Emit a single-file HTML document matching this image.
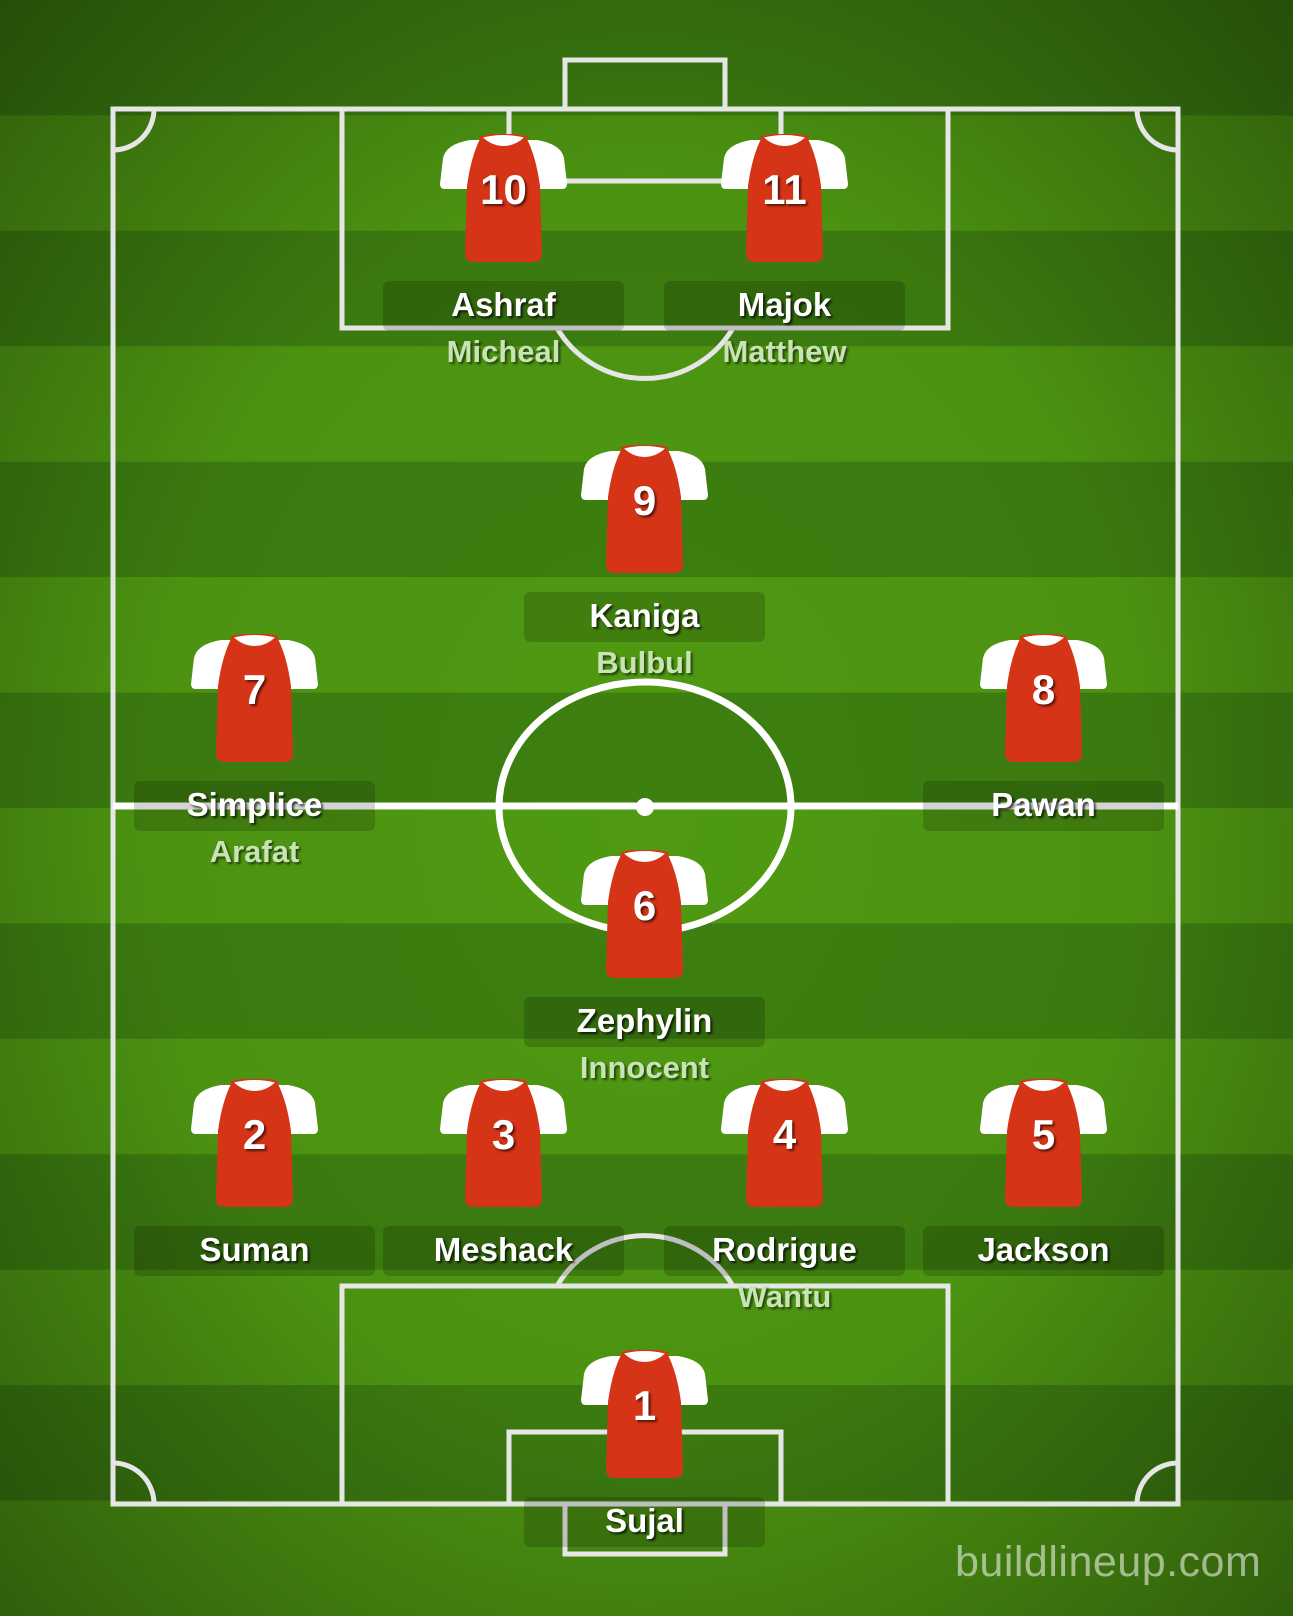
<!DOCTYPE html>
<html><head><meta charset="utf-8"><style>
html,body{margin:0;padding:0}
body{width:1293px;height:1616px;position:relative;overflow:hidden;font-family:"Liberation Sans",sans-serif;background:#458a10}
.p{position:absolute;width:241px;margin-left:-120px;text-align:center}
.j{display:block;margin:0 auto;width:127px;height:128px;position:relative}
.j svg{position:absolute;left:0;top:0}
.num{position:absolute;left:0;right:0;top:32px;color:#fff;font-weight:bold;font-size:42px;text-shadow:2px 2px 2px rgba(0,0,0,.6);text-align:center}
.nb{position:absolute;left:0;top:147px;width:241px;height:50px;border-radius:6px;background:rgba(0,0,0,.17)}
.nm{position:absolute;left:0;right:0;top:152px;color:#fff;font-weight:bold;font-size:33px;text-shadow:2px 2px 2px rgba(0,0,0,.7)}
.sb{position:absolute;left:0;right:0;top:200px;color:#c9e4b4;font-weight:bold;font-size:31px;text-shadow:2px 2px 2px rgba(0,0,0,.55)}
.wm{position:absolute;left:955px;top:1538px;font-size:43px;letter-spacing:0.5px;color:rgba(235,240,230,.6)}
</style></head><body>
<svg width="1293" height="1616" style="position:absolute;left:0;top:0">
<defs>
<radialGradient id="v" cx="50%" cy="50%" r="70%">
<stop offset="0" stop-color="#000" stop-opacity="0"/>
<stop offset="0.55" stop-color="#000" stop-opacity="0.05"/>
<stop offset="1" stop-color="#000" stop-opacity="0.38"/>
</radialGradient>
</defs>
<rect width="1293" height="1616" fill="#4f9a12"/>
<g fill="#3e8010">
<rect y="0" width="1293" height="115.4"/>
<rect y="230.8" width="1293" height="115.4"/>
<rect y="461.7" width="1293" height="115.4"/>
<rect y="692.6" width="1293" height="115.4"/>
<rect y="923.4" width="1293" height="115.4"/>
<rect y="1154.3" width="1293" height="115.4"/>
<rect y="1385.1" width="1293" height="115.4"/>
</g>
<rect width="1293" height="1616" fill="url(#v)"/>
<g fill="none" stroke="#e6e6e6" stroke-width="5">
<rect x="113" y="109" width="1065" height="1395"/>
<rect x="342" y="109" width="606" height="219"/>
<rect x="509" y="109" width="272" height="72"/>
<rect x="565" y="60" width="160" height="49"/>
<path d="M557 328 A102 102 0 0 0 733 328"/>
<rect x="342" y="1286" width="606" height="218"/>
<rect x="509" y="1432" width="272" height="72"/>
<rect x="565" y="1504" width="160" height="50"/>
<path d="M557 1286 A102 102 0 0 1 733 1286"/>
<path d="M113 150 A41 41 0 0 0 154 109"/>
<path d="M1137 109 A41 41 0 0 0 1178 150"/>
<path d="M113 1463 A41 41 0 0 1 154 1504"/>
<path d="M1137 1504 A41 41 0 0 1 1178 1463"/>
</g>
<g fill="none" stroke="#fff" stroke-width="7">
<line x1="113" y1="806" x2="1178" y2="806"/>
<ellipse cx="645" cy="807" rx="146" ry="125"/>
</g>
<circle cx="645" cy="807" r="9" fill="#fff"/>
</svg>

<svg width="0" height="0" style="position:absolute"><defs>
<g id="jer">
<path d="M30 6 L97 6 Q121 10 124 24 L127 50 Q127 55 122 55 L5 55 Q0 55 0 50 L3 24 Q6 10 30 6 Z" fill="#fff"/>
<path d="M41 3 Q52 12 63.5 12 Q75 12 86 3 Q96 22 100 52 L102 120 Q102 128 93 128 L34 128 Q25 128 25 120 L27 52 Q31 22 41 3 Z" fill="#d63417"/>
<path d="M41 3 Q63.5 -3 86 3 Q76 13 63.5 13 Q51 13 41 3 Z" fill="#fff" stroke="#d63417" stroke-width="2"/>
</g></defs></svg>

<div class="p" style="left:503px;top:134px"><div class="j"><svg width="127" height="128"><use href="#jer"/></svg><div class="num">10</div></div><div class="nb"></div><div class="nm">Ashraf</div><div class="sb">Micheal</div></div>
<div class="p" style="left:784px;top:134px"><div class="j"><svg width="127" height="128"><use href="#jer"/></svg><div class="num">11</div></div><div class="nb"></div><div class="nm">Majok</div><div class="sb">Matthew</div></div>
<div class="p" style="left:644px;top:445px"><div class="j"><svg width="127" height="128"><use href="#jer"/></svg><div class="num">9</div></div><div class="nb"></div><div class="nm">Kaniga</div><div class="sb">Bulbul</div></div>
<div class="p" style="left:254px;top:634px"><div class="j"><svg width="127" height="128"><use href="#jer"/></svg><div class="num">7</div></div><div class="nb"></div><div class="nm">Simplice</div><div class="sb">Arafat</div></div>
<div class="p" style="left:1043px;top:634px"><div class="j"><svg width="127" height="128"><use href="#jer"/></svg><div class="num">8</div></div><div class="nb"></div><div class="nm">Pawan</div></div>
<div class="p" style="left:644px;top:850px"><div class="j"><svg width="127" height="128"><use href="#jer"/></svg><div class="num">6</div></div><div class="nb"></div><div class="nm">Zephylin</div><div class="sb">Innocent</div></div>
<div class="p" style="left:254px;top:1079px"><div class="j"><svg width="127" height="128"><use href="#jer"/></svg><div class="num">2</div></div><div class="nb"></div><div class="nm">Suman</div></div>
<div class="p" style="left:503px;top:1079px"><div class="j"><svg width="127" height="128"><use href="#jer"/></svg><div class="num">3</div></div><div class="nb"></div><div class="nm">Meshack</div></div>
<div class="p" style="left:784px;top:1079px"><div class="j"><svg width="127" height="128"><use href="#jer"/></svg><div class="num">4</div></div><div class="nb"></div><div class="nm">Rodrigue</div><div class="sb">Wantu</div></div>
<div class="p" style="left:1043px;top:1079px"><div class="j"><svg width="127" height="128"><use href="#jer"/></svg><div class="num">5</div></div><div class="nb"></div><div class="nm">Jackson</div></div>
<div class="p" style="left:644px;top:1350px"><div class="j"><svg width="127" height="128"><use href="#jer"/></svg><div class="num">1</div></div><div class="nb"></div><div class="nm">Sujal</div></div>

<div class="wm">buildlineup.com</div>
</body></html>
